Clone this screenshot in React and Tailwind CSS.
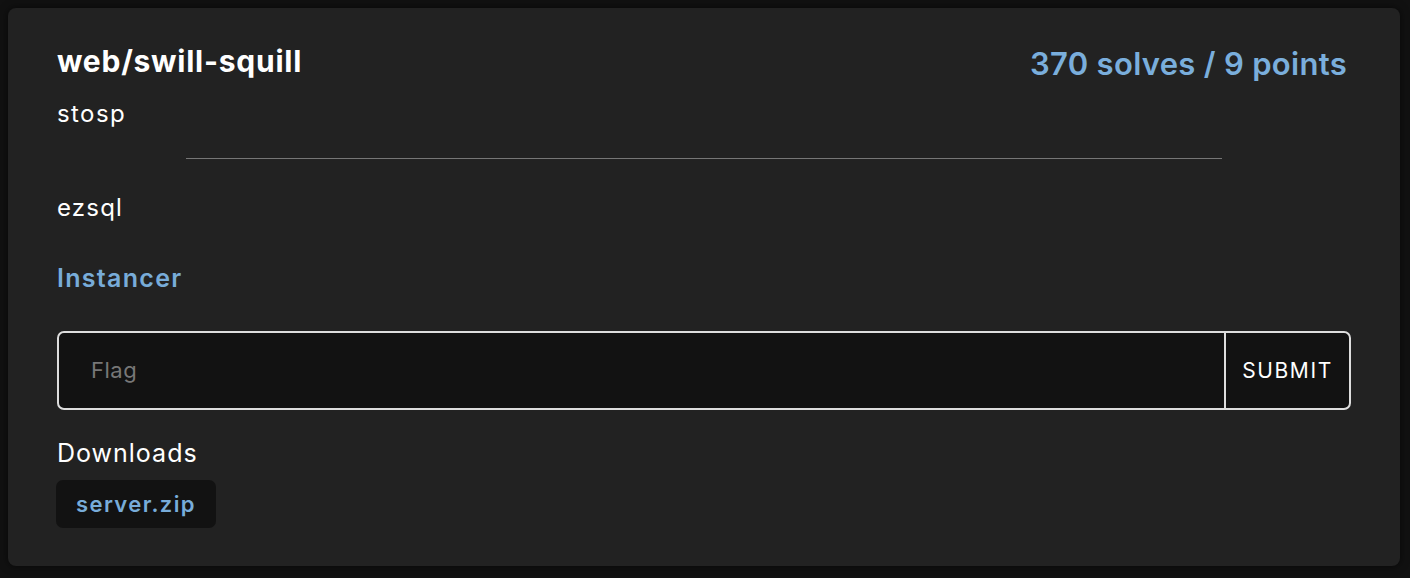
import React from "react";

export default function App() {
  return (
    <div
      className="min-h-screen w-full bg-[#111111] pt-[8px] pl-[8px] pr-[10px] pb-[12px]"
      style={{ fontFamily: "Inter, 'Noto Sans', sans-serif" }}
    >
      <div className="h-[558px] rounded-[8px] bg-[#222222] shadow-[0_0_8px_rgba(0,0,0,0.6)] px-[49px] pt-[35px]">
        <div className="flex items-start justify-between">
          <h1 className="text-[30px] leading-[36px] font-bold text-white tracking-[0.75px]">web/swill-squill</h1>
          <div className="text-[31px] leading-[36px] font-semibold text-[#7aaedc] pt-[3px] mr-[4px] tracking-[0.3px]">
            370 solves / 9 points
          </div>
        </div>
        <div className="mt-[16px] text-[24px] leading-[32px] text-white tracking-[1.4px]">stosp</div>
        <div className="mt-[28px] mx-auto w-[80%] h-px bg-[#767676]" />
        <div className="mt-[33px] text-[24px] leading-[32px] text-white tracking-[1.2px]">ezsql</div>
        <div className="mt-[38px] text-[25px] leading-[32px] font-semibold text-[#78acd9] tracking-[1.3px]">Instancer</div>
        <div className="mt-[37px] flex h-[79px] rounded-[7px] border-2 border-[#dddddd] bg-[#121212] overflow-hidden">
          <input
            className="flex-1 bg-transparent px-[32px] text-[22px] text-white placeholder-[#777777] outline-none tracking-[0.5px]"
            placeholder="Flag"
          />
          <button className="w-[125px] border-l-2 border-[#dddddd] text-[21px] tracking-[1.6px] text-white">
            SUBMIT
          </button>
        </div>
        <div className="mt-[27px] text-[25px] leading-[32px] text-white tracking-[1px]">Downloads</div>
        <div className="mt-[11px] -ml-px">
          <span className="inline-flex h-[48px] items-center rounded-[7px] bg-[#121212] px-[20px] text-[22px] font-semibold text-[#78acd9] tracking-[1.4px]">
            server.zip
          </span>
        </div>
      </div>
    </div>
  );
}
